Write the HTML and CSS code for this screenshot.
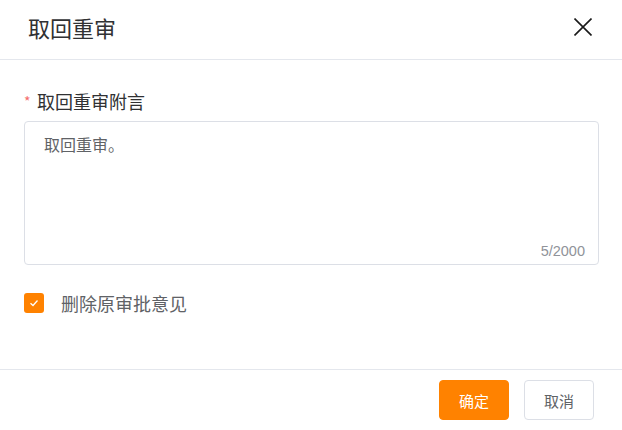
FILE: index.html
```html
<!DOCTYPE html>
<html lang="zh-CN">
<head>
<meta charset="utf-8">
<title>取回重审</title>
<link rel="stylesheet" href="styles.css">
</head>
<body>
<div class="dialog">
  <div class="dialog-header">
    <span class="dialog-title">取回重审</span>
    <button class="close-btn" aria-label="关闭">
      <svg width="18" height="18" viewBox="0 0 18 18"><path d="M0.5 0.5 L17.5 17.5 M17.5 0.5 L0.5 17.5" stroke="#1a1a1a" stroke-width="1.6" fill="none"/></svg>
    </button>
  </div>
  <div class="dialog-body">
    <div class="form-label"><span class="required">*</span>取回重审附言</div>
    <div class="textarea-wrap">
      <textarea class="textarea">取回重审。</textarea>
      <span class="counter">5/2000</span>
    </div>
    <label class="checkbox-row">
      <span class="checkbox">
        <svg width="12" height="12" viewBox="0 0 12 12"><path d="M2.5 6.2 L5 8.5 L9.5 3.5" stroke="#fff" stroke-width="1.3" fill="none"/></svg>
      </span>
      <span class="checkbox-label">删除原审批意见</span>
    </label>
  </div>
  <div class="dialog-footer">
    <button class="btn btn-primary">确定</button>
    <button class="btn btn-default">取消</button>
  </div>
</div>
</body>
</html>
```

FILE: styles.css
```css
* { box-sizing: border-box; }
html, body {
  margin: 0;
  padding: 0;
  background: #fff;
  font-family: "Noto Sans CJK SC", "Noto Sans", sans-serif;
}
.dialog {
  width: 622px;
  height: 430px;
  display: flex;
  flex-direction: column;
}
.dialog-header {
  height: 60px;
  flex: none;
  display: flex;
  align-items: center;
  justify-content: space-between;
  padding: 0 30px 6px 28px;
  border-bottom: 1px solid #e4e7ed;
}
.dialog-title {
  font-size: 22px;
  color: #303133;
  line-height: 26px;
}
.close-btn {
  border: none;
  background: none;
  padding: 0;
  width: 18px;
  height: 18px;
  display: flex;
}
.dialog-body {
  flex: 1;
  padding: 29px 23px 0 24px;
}
.form-label {
  font-size: 18px;
  color: #303133;
  line-height: 24px;
  display: flex;
  align-items: center;
}
.required {
  color: #f56c6c;
  font-size: 14px;
  width: 13px;
}
.textarea-wrap {
  position: relative;
  margin-top: 8px;
}
.textarea {
  display: block;
  width: 100%;
  height: 144px;
  resize: none;
  border: 1px solid #dcdfe6;
  border-radius: 4px;
  padding: 10px 19px;
  font-family: inherit;
  font-size: 16px;
  line-height: 24px;
  color: #606266;
  outline: none;
}
.counter {
  position: absolute;
  right: 14px;
  bottom: 6px;
  font-family: "Liberation Sans", Arial, sans-serif;
  font-size: 14.5px;
  color: #909399;
}
.checkbox-row {
  margin-top: 28px;
  display: flex;
  align-items: center;
  height: 20px;
}
.checkbox {
  width: 20px;
  height: 20px;
  border-radius: 3px;
  background: #ff8200;
  display: flex;
  align-items: center;
  justify-content: center;
}
.checkbox-label {
  margin-left: 17px;
  font-size: 18px;
  color: #606266;
}
.dialog-footer {
  flex: none;
  height: 61px;
  border-top: 1px solid #e4e7ed;
  display: flex;
  justify-content: flex-end;
  align-items: flex-start;
  padding: 10px 28px 0 0;
  gap: 15px;
}
.btn {
  width: 70px;
  height: 40px;
  border-radius: 4px;
  font-family: inherit;
  font-size: 15px;
  cursor: pointer;
}
.btn-primary {
  background: #ff8200;
  border: 1px solid #ff8200;
  color: #fff;
}
.btn-default {
  background: #fff;
  border: 1px solid #dcdfe6;
  color: #606266;
}
```
